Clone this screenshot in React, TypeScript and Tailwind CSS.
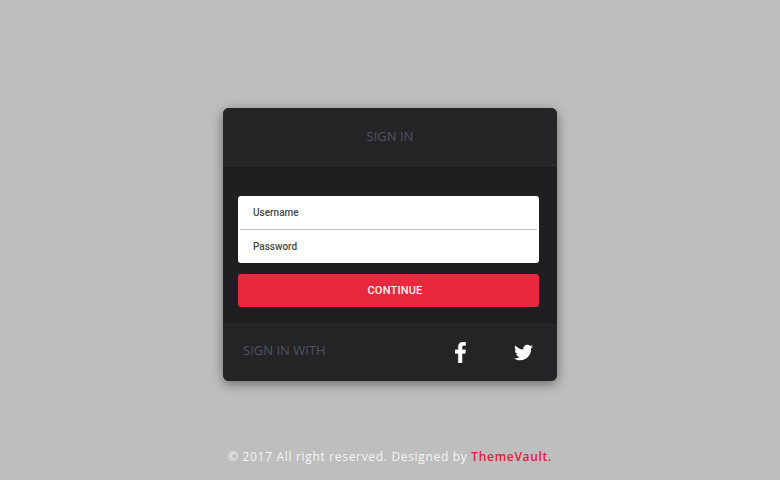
import { FaTwitter } from "react-icons/fa"

const FacebookIcon = () => (
  <svg viewBox="0 0 10.2 20" className="w-[11px] h-[21px] fill-current stroke-current stroke-[0.3]">
    <path d="M6.6 20V10.9h3l.45-3.55H6.6V5.1c0-1 .28-1.7 1.73-1.7h1.85V.2C9.86.15 8.76 0 7.48 0 4.8 0 2.97 1.63 2.97 4.63v2.72H0V10.9h2.97V20z" />
  </svg>
)

const App = () => {
  return (
    <div className="w-[780px] h-[480px] overflow-hidden bg-[#bebebe] flex flex-col items-center pt-[108px] font-['Open_Sans',sans-serif]">
      <div className="w-[334px] h-[273px] rounded-[6px] bg-[#1f1f21] shadow-[0_3px_12px_rgba(0,0,0,0.45)] flex flex-col overflow-hidden">
        <div className="h-[58px] bg-[#252528] border-b border-[#2e2e32] flex items-center justify-center">
          <span className="text-[13px] text-[#4f5362]">SIGN IN</span>
        </div>

        <div className="h-[158px] px-[15px] pt-[30px]">
          <div className="w-[301px] h-[67px] bg-white rounded-[3px] flex flex-col font-['Roboto',sans-serif] text-[10px] font-medium text-[#4a4a4a]">
            <div className="h-[34px] mx-[2px] pl-[13px] border-b border-[#bcbcbc] flex items-center">Username</div>
            <div className="flex-1 pl-[15px] flex items-center">Password</div>
          </div>
          <button className="mt-[11px] w-[301px] h-[33px] bg-[#e8283c] rounded-[3px] text-[#f7f7f7] text-[11px] font-medium tracking-[0.2px] font-['Roboto',sans-serif] pl-[13px] pt-[1px] flex items-center justify-center">
            CONTINUE
          </button>
        </div>

        <div className="flex-1 bg-[#242427] border-t border-[#2a2a2e] flex items-center pl-[20px] pb-[5px]">
          <span className="text-[13px] text-[#4f5362]">SIGN IN WITH</span>
          <div className="ml-auto flex items-center pr-[24px] pt-[4px] text-white">
            <FacebookIcon />
            <FaTwitter className="w-[19px] h-[19px] ml-[48px]" />
          </div>
        </div>
      </div>

      <p className="mt-[67px] text-[12px] leading-[18px] font-medium tracking-[0.68px] text-[#f5f5f5]">
        © 2017 All right reserved. Designed by <span className="font-semibold text-[#e0203a]">ThemeVault.</span>
      </p>
    </div>
  )
}
export default App
